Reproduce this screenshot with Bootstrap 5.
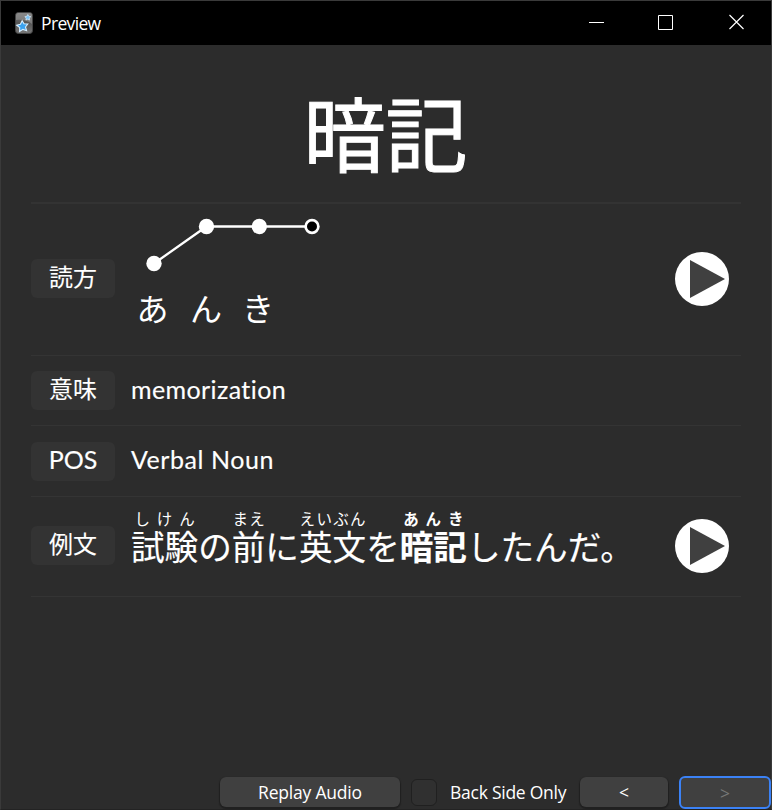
<!DOCTYPE html>
<html lang="en" data-bs-theme="dark">
<head>
<meta charset="utf-8">
<meta name="viewport" content="width=device-width, initial-scale=1">
<title>Preview</title>
<link href="https://cdn.jsdelivr.net/npm/bootstrap@5.3.0/dist/css/bootstrap.min.css" rel="stylesheet">
<style>
body{background:#2c2c2c;color:#fff;font-family:"Open Sans","Noto Sans CJK JP",sans-serif;overflow:hidden}
.window{height:100vh;border:1px solid #3a3a3a;border-bottom-color:#232323}
.titlebar{height:44px;background:#000;padding-left:14px;padding-bottom:1px;flex:none}
.title-text{font-size:17.5px;letter-spacing:-.65px;line-height:44px;margin-left:8px}
.win-controls{gap:53px;padding-right:27px;padding-bottom:1px}
.win-controls svg{display:block}
.note{padding:0 30px;font-family:Lato,"Noto Sans CJK JP",sans-serif}
.headword{height:159px;border-bottom:2px solid #333;font-size:82px;line-height:82px;padding-top:48px;padding-right:1px;font-weight:400;-webkit-text-stroke:1px #fff}
.field{border-bottom:1px solid #343434;height:71px}
.field-reading{height:152px;padding-bottom:2px}
.field-meaning{height:70px}
.field-example{height:100px;padding-bottom:2px}
.field-label{width:84px;height:39px;border-radius:6px;background:#333;font-size:24px;line-height:35px;margin-right:15px;flex:none;-webkit-text-stroke:.1px #fff}
.latin{font-size:25px;line-height:36px;padding-bottom:4px;padding-left:1px;-webkit-text-stroke:.15px #fff}
.field-label.latin{line-height:35px;padding:0}
.meaning{letter-spacing:.4px}
.pos{letter-spacing:.55px}
.pitch{width:210px;height:122px}
.pitch text{font-size:32px;fill:#fff;text-anchor:middle}
.sentence{font-size:33.6px;line-height:40px;white-space:nowrap;padding-bottom:14px;padding-left:1px;-webkit-text-stroke:.15px #fff}
.sentence rt{font-size:15.5px;line-height:24px;padding-bottom:2px;-webkit-text-stroke:0}
.play{border:0;background:none;padding:0;width:54px;height:54px;margin-right:12px}
.play svg{display:block}
.bottombar{height:34px;flex:none;font-size:17.5px;line-height:30px}
.tool{height:30px;border:0;border-radius:6px;background:#404040;box-shadow:0 1px 1px 1px #202020;color:#fff;font-size:17.5px;line-height:31px;padding:0}
.tool-replay{width:180px;letter-spacing:-.2px}
.tool-nav{width:88px;margin-left:13px}
.tool-next{width:92px;height:33px;margin-left:11px;border:2px solid #3b82f6;box-shadow:none;color:#777;line-height:31px}
.check{width:26px;height:27px;border:1px solid #202020;border-radius:6px;background:#303030;margin-left:11px;margin-right:13px;appearance:none}
.check-label{letter-spacing:-.25px;width:117px;white-space:nowrap}
</style>
<script src="https://cdn.jsdelivr.net/npm/bootstrap@5.3.0/dist/js/bootstrap.bundle.min.js"></script>
</head>
<body>
<div class="window d-flex flex-column">
  <header class="titlebar d-flex align-items-center">
    <svg width="18" height="22" viewBox="0 0 18 22" aria-hidden="true">
      <defs><linearGradient id="deck" x2="0" y2="1"><stop stop-color="#777"/><stop offset=".5" stop-color="#555"/><stop offset="1" stop-color="#777"/></linearGradient></defs>
      <rect x=".5" y=".5" width="17" height="21" rx="3" fill="url(#deck)" stroke="#444"/>
      <path d="M1 3q0-2 2-2h12q2 0 2 2v9Q10 7 1 8z" fill="#999" opacity=".55"/>
      <path d="M7.2 8.7l1.8 3.1 3.8.2-2.3 3 1.1 3.7-3.7-1.3-3.3 2 .1-3.8-3-2.3 3.7-1z" fill="#3ba3f0" stroke="#d8efff" stroke-width="1.1"/>
      <path d="M12.8 2.5l.9 1.7 2.1.5-1.5 1.4.2 2-1.8-.9-1.8.8.3-1.9-1.3-1.4 2-.4z" fill="#79c2f5" stroke="#d8efff" stroke-width=".7"/>
    </svg>
    <span class="title-text">Preview</span>
    <div class="win-controls d-flex ms-auto">
      <svg width="16" height="16" overflow="visible" fill="none" stroke="#fff"><path d="M-1 8.500h15"/></svg>
      <svg width="16" height="16" overflow="visible" fill="none" stroke="#fff"><path d="M-.5 1.500h14v14H-.5z"/></svg>
      <svg width="16" height="16" fill="none" stroke="#fff" stroke-width="1.2"><path d="M1.500 1l14 14M15.500 1l-14 14"/></svg>
    </div>
  </header>
  <main class="note flex-grow-1">
    <h1 class="headword text-center mb-0" lang="ja">暗記</h1>
    <section class="field field-reading d-flex align-items-center">
      <div class="field-label text-center" lang="ja">読方</div>
      <svg class="pitch" viewBox="130 218 210 122" lang="ja">
        <path d="M154 263.500L206.500 226.500H312" fill="none" stroke="#fff" stroke-width="2.300"/>
        <g fill="#fff"><circle cx="154" cy="263.500" r="7.700"/><circle cx="206.500" cy="226.500" r="7.700"/><circle cx="259.300" cy="226.500" r="7.700"/><circle cx="312" cy="226.500" r="7.700"/></g>
        <circle cx="312" cy="226.500" r="5" fill="#000"/>
        <text x="152.500" y="321">あ</text><text x="206" y="321">ん</text><text x="258" y="321">き</text>
      </svg>
      <button class="play ms-auto" aria-label="Play reading"><svg width="54" height="54"><circle cx="27" cy="27" r="27" fill="#fff"/><path d="M15 8v38l35-19z" fill="#404040"/></svg></button>
    </section>
    <section class="field field-meaning d-flex align-items-center">
      <div class="field-label text-center" lang="ja">意味</div>
      <div class="latin meaning">memorization</div>
    </section>
    <section class="field d-flex align-items-center">
      <div class="field-label latin text-center">POS</div>
      <div class="latin pos">Verbal Noun</div>
    </section>
    <section class="field field-example d-flex align-items-center">
      <div class="field-label text-center" lang="ja">例文</div>
      <div class="sentence" lang="ja"><ruby>試験<rt>しけん</rt></ruby>の<ruby>前<rt>まえ</rt></ruby>に<ruby>英文<rt>えいぶん</rt></ruby>を<b><ruby>暗記<rt>あんき</rt></ruby></b>したんだ。</div>
      <button class="play ms-auto" aria-label="Play example"><svg width="54" height="54"><circle cx="27" cy="27" r="27" fill="#fff"/><path d="M15 8v38l35-19z" fill="#404040"/></svg></button>
    </section>
  </main>
  <footer class="bottombar d-flex justify-content-end align-items-center">
    <button class="tool tool-replay">Replay Audio</button>
    <input class="check" type="checkbox" id="back"><label class="check-label" for="back">Back Side Only</label>
    <button class="tool tool-nav">&lt;</button>
    <button class="tool tool-next">&gt;</button>
  </footer>
</div>
</body>
</html>
